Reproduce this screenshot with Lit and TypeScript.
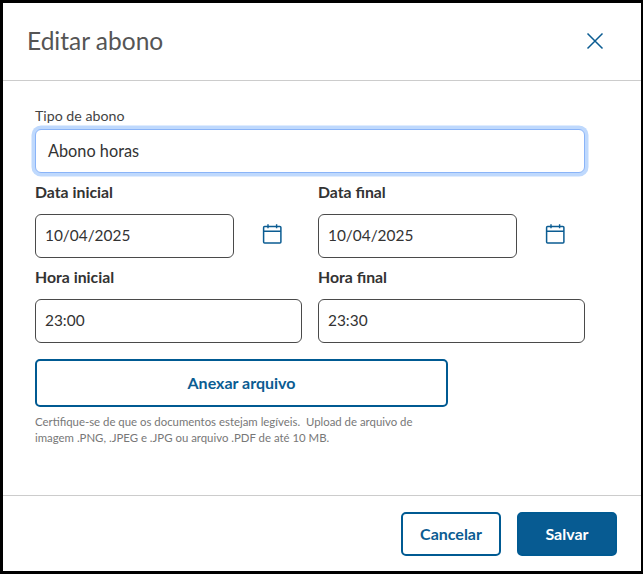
import { LitElement, html, css, svg } from 'lit';
import { customElement } from 'lit/decorators.js';

const calendarIcon = svg`
  <rect x="1.6" y="3.6" width="17.3" height="16.5" rx="1" fill="none" stroke="currentColor" stroke-width="1.5"></rect>
  <path d="M1.6 8.2h17.3M6 1.2v4M14.6 1.2v4" fill="none" stroke="currentColor" stroke-width="1.4"></path>
`;

@customElement('app-root')
export class AppRoot extends LitElement {
  static styles = css`
    :host {
      display: block;
      box-sizing: border-box;
      width: 643px;
      height: 574px;
      background: #000;
      padding: 3px 2px 3px 3px;
      font-family: 'Lato', 'Noto Sans', sans-serif;
      color: #333;
    }

    * {
      box-sizing: border-box;
    }

    .modal {
      height: 100%;
      background: #fff;
      display: flex;
      flex-direction: column;
    }

    .header {
      height: 78px;
      flex: none;
      border-bottom: 1px solid #ccc;
      padding: 0 37px 2px 24px;
      display: flex;
      align-items: center;
      justify-content: space-between;
    }

    .title {
      font-size: 24.5px;
      font-weight: 400;
      color: #555;
      margin: 0;
    }

    .close {
      width: 18px;
      height: 18px;
      color: #0b5c92;
      display: block;
    }

    .body {
      flex: 1;
      padding: 26px 0 0 32px;
    }

    .type-label {
      font-size: 14.2px;
      line-height: 18px;
      height: 20px;
      color: #444;
      display: block;
      margin-bottom: 2px;
    }

    .input {
      border: 1px solid #4a4a4a;
      border-radius: 6px;
      height: 44px;
      padding: 0 8px 2px 9px;
      display: flex;
      align-items: center;
      font-size: 15.4px;
      color: #333;
      background: #fff;
    }

    .input.focused {
      width: 550px;
      padding: 0 12px 2px;
      font-size: 16.3px;
      border: 1px solid #8ab4f8;
      box-shadow: 0 0 0 3.5px #bfd9fd;
    }

    .grid {
      display: grid;
      grid-template-columns: 267px 267px;
      column-gap: 16px;
      width: 550px;
    }

    .field-label {
      font-size: 15.8px;
      font-weight: 700;
      line-height: 20px;
      color: #333;
      display: block;
      margin: 9px 0 12px;
    }

    .date-row {
      display: flex;
      align-items: center;
      gap: 28px;
    }

    .date-row .input {
      width: 199px;
    }

    .cal {
      width: 20px;
      height: 22px;
      margin-bottom: 4px;
      color: #0b5c92;
      display: block;
    }

    .btn {
      font-family: inherit;
      font-size: 16px;
      font-weight: 700;
      border-radius: 5px;
      border: 2px solid #005a92;
      background: #fff;
      color: #0b5c92;
      padding: 0 0 2px;
    }

    .attach {
      display: block;
      width: 413px;
      height: 48px;
      margin-top: 16px;
    }

    .note {
      width: 400px;
      margin: 7px 0 0;
      font-size: 11.4px;
      line-height: 15.5px;
      color: #777;
    }

    .footer {
      height: 76px;
      flex: none;
      border-top: 1px solid #ccc;
      padding: 16px 24px 0 0;
      display: flex;
      justify-content: flex-end;
      gap: 16px;
    }

    .footer .btn {
      width: 100px;
      height: 44px;
    }

    .btn.primary {
      background: #075b92;
      color: #fff;
    }
  `;

  render() {
    return html`
      <div class="modal">
        <div class="header">
          <h2 class="title">Editar abono</h2>
          <svg class="close" viewBox="0 0 18 18">
            <path d="M1.5 1.5l15 15M16.500 1.500l-15 15" fill="none" stroke="currentColor" stroke-width="1.5"></path>
          </svg>
        </div>
        <div class="body">
          <label class="type-label">Tipo de abono</label>
          <div class="input focused">Abono horas</div>
          <div class="grid">
            ${this.renderDate('Data inicial', '10/04/2025')}
            ${this.renderDate('Data final', '10/04/2025')}
            ${this.renderHour('Hora inicial', '23:00')}
            ${this.renderHour('Hora final', '23:30')}
          </div>
          <button class="btn attach">Anexar arquivo</button>
          <p class="note">
            Certifique-se de que os documentos estejam legíveis.&nbsp; Upload de arquivo de
            imagem .PNG, .JPEG e .JPG ou arquivo .PDF de até 10 MB.
          </p>
        </div>
        <div class="footer">
          <button class="btn">Cancelar</button>
          <button class="btn primary">Salvar</button>
        </div>
      </div>
    `;
  }

  private renderDate(label: string, value: string) {
    return html`
      <div>
        <label class="field-label">${label}</label>
        <div class="date-row">
          <div class="input">${value}</div>
          <svg class="cal" viewBox="0 0 20 22">${calendarIcon}</svg>
        </div>
      </div>
    `;
  }

  private renderHour(label: string, value: string) {
    return html`
      <div>
        <label class="field-label">${label}</label>
        <div class="input">${value}</div>
      </div>
    `;
  }
}
